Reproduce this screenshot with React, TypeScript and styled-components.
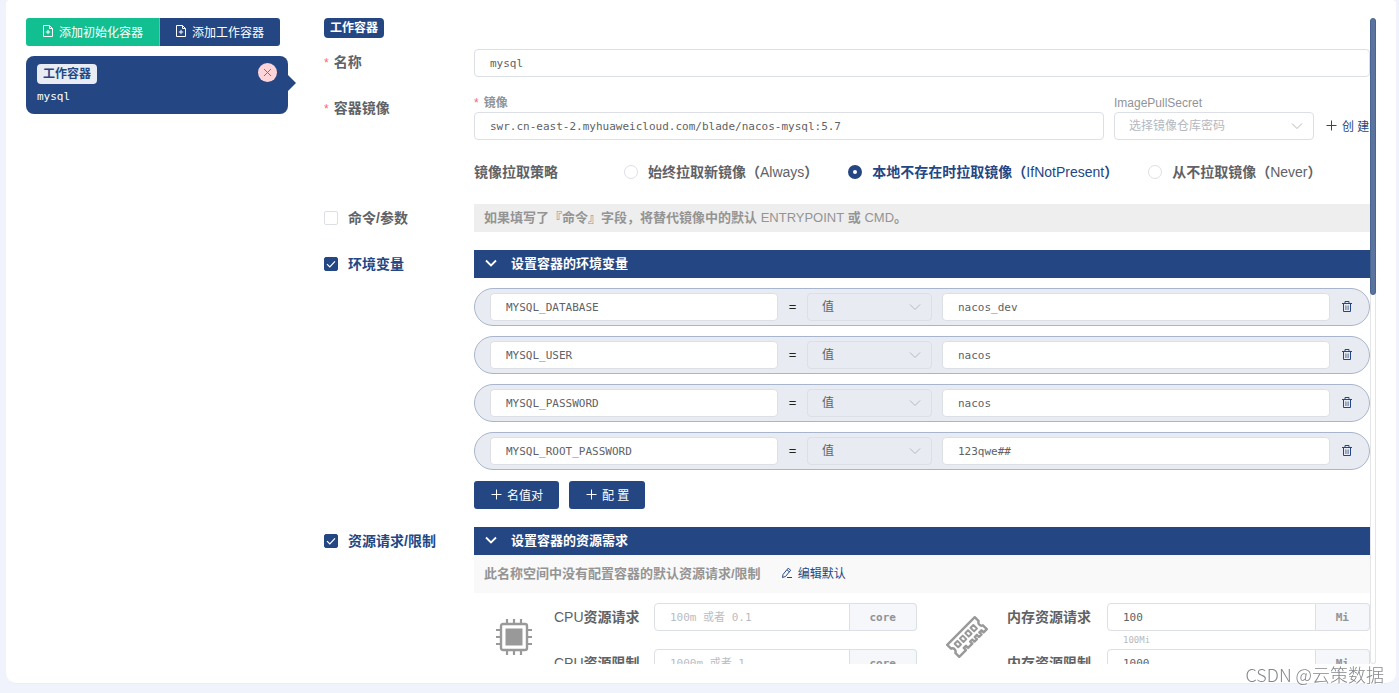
import React from 'react';
import styled, { createGlobalStyle, css } from 'styled-components';

const primary = '#244783';
const border = '#dcdfe6';
const text = '#606266';
const muted = '#909399';
const sans = `'Liberation Sans', 'Noto Sans CJK SC', sans-serif`;
const mono = `'DejaVu Sans Mono', 'Noto Sans CJK SC', monospace`;

const GlobalStyle = createGlobalStyle`
  *, *::before, *::after { box-sizing: border-box; }
  body { margin: 0; background: #f0f3fb; font-family: ${sans}; font-size: 12px; color: ${text}; overflow: hidden; }
  button, input, select { font: inherit; color: inherit; margin: 0; }
  button { cursor: pointer; }
`;

const Page = styled.div`
  display: flex;
  flex-direction: column;
  height: 100vh;
  padding: 0 3px 9px 6px;
`;

const Card = styled.main`
  flex: 1;
  min-height: 0;
  display: grid;
  grid-template-columns: 262px minmax(0, 1fr);
  gap: 36px;
  padding: 18px 20px 19px;
  background: #fff;
  border-bottom: 1px solid #e9edf5;
  border-radius: 4px 4px 10px 10px;
`;

const Sidebar = styled.aside`
  display: flex;
  flex-direction: column;
  gap: 10px;
`;

const ButtonGroup = styled.div`
  display: flex;
`;

const Button = styled.button<{ $tone?: 'green' | 'text' }>`
  display: flex;
  align-items: center;
  gap: 5px;
  height: 28px;
  padding: 0 16px 2px;
  border: 0;
  border-radius: 3px;
  background: ${p => (p.$tone === 'green' ? '#11bf91' : p.$tone === 'text' ? 'transparent' : primary)};
  color: ${p => (p.$tone === 'text' ? primary : '#fff')};
  white-space: nowrap;

  ${ButtonGroup} &:first-child { border-radius: 3px 0 0 3px; }
  ${ButtonGroup} &:last-child { border-radius: 0 3px 3px 0; box-shadow: inset 1px 0 #92a3c1; }
`;

const CreateButton = styled(Button)`
  flex: 0 0 56px;
  padding: 0 0 2px 11px;
  overflow: hidden;
`;

const ContainerCard = styled.section`
  position: relative;
  display: flex;
  flex-direction: column;
  align-items: flex-start;
  gap: 5px;
  height: 58px;
  padding: 8px 11px;
  border-radius: 8px;
  background: ${primary};
  color: #fff;
  font-family: ${mono};
  font-size: 11px;
  line-height: 16px;

  &::after {
    content: '';
    position: absolute;
    left: 100%;
    top: 19px;
    border: 8px solid transparent;
    border-left-color: ${primary};
    border-right-width: 0;
  }
`;

const Tag = styled.span<{ $light?: boolean }>`
  align-self: flex-start;
  height: 20px;
  padding: 0 6px;
  border-radius: 4px;
  background: ${p => (p.$light ? '#e9edf3' : primary)};
  color: ${p => (p.$light ? primary : '#fff')};
  font: bold 12px/20px ${sans};
`;

const CloseButton = styled.button`
  position: absolute;
  top: 7px;
  right: 11px;
  display: grid;
  place-items: center;
  width: 19px;
  height: 19px;
  padding: 0;
  border: 0;
  border-radius: 50%;
  background: #fdd5d8;
  color: #f0404f;
`;

const ScrollPane = styled.div`
  display: flex;
  min-height: 0;
`;

const Form = styled.form`
  flex: 1;
  min-width: 0;
  overflow: hidden;
  display: flex;
  flex-direction: column;
`;

const Track = styled.div`
  flex: 0 0 6px;
  border: solid #e4e5e9;
  border-width: 0 1px 1px;
  border-radius: 3px;
`;

const Thumb = styled.div`
  height: 43%;
  margin: 0 -1px;
  border: 1px solid #4a6491;
  border-radius: 3px;
  background: #5a739f;
`;

const Row = styled.div<{ $top?: number }>`
  flex: none;
  display: grid;
  grid-template-columns: 150px minmax(0, 1fr);
  margin-top: ${p => p.$top ?? 18}px;
`;

const Title = styled.div`
  font-size: 14px;
  font-weight: bold;
  line-height: 26px;
`;

const Star = styled.span`
  margin-right: 5px;
  color: #f56c6c;
  font-size: 12px;
  font-weight: normal;
`;

const Thin = styled.span`
  font-weight: normal;
`;

const Caption = styled.span`
  padding-bottom: 2px;
`;

const Check = styled.label<{ $on?: boolean }>`
  display: flex;
  align-items: center;
  gap: 10px;
  height: 28px;
  font-size: 14px;
  font-weight: bold;
  color: ${p => (p.$on ? primary : text)};
`;

const Box = styled.input`
  appearance: none;
  width: 14px;
  height: 14px;
  border: 1px solid ${border};
  border-radius: 2px;
  background: #fff;

  &:checked {
    border-color: ${primary};
    background: ${primary} url("data:image/svg+xml,%3Csvg xmlns='http://www.w3.org/2000/svg' viewBox='0 0 12 12'%3E%3Cpath d='M2 6.2 4.8 9 10 3.4' fill='none' stroke='white' stroke-width='1.2'/%3E%3C/svg%3E") center / 12px no-repeat;
  }
`;

const Radio = styled.input`
  appearance: none;
  width: 14px;
  height: 14px;
  border: 1px solid ${border};
  border-radius: 50%;
  background: #fff;

  &:checked { border: 5px solid ${primary}; }
`;

const field = css`
  height: 28px;
  width: 100%;
  min-width: 0;
  border: 1px solid ${border};
  border-radius: 4px;
  background: #fff;
  color: ${text};
  outline: none;
`;

const Input = styled.input`
  ${field}
  padding: 0 15px;
  font-family: ${mono};
  font-size: 11px;
  &::placeholder { color: #b9bcc3; opacity: 1; }
`;

const SelectWrap = styled.div`
  position: relative;
  display: flex;

  svg {
    position: absolute;
    right: 11px;
    top: 8px;
    color: #b4b8c0;
    pointer-events: none;
  }
`;

const Select = styled.select<{ $plain?: boolean }>`
  ${field}
  appearance: none;
  padding: 0 30px 0 14px;
  ${p => (p.$plain ? 'background: transparent;' : 'color: #b4b8c0;')}
`;

const ImageLine = styled.div`
  display: flex;
  align-items: flex-end;
`;

const Stack = styled.div<{ $fixed?: boolean }>`
  flex: ${p => (p.$fixed ? '0 0 200px' : '1')};
  min-width: 0;
  display: flex;
  flex-direction: column;
  margin-right: ${p => (p.$fixed ? 0 : 10)}px;
`;

const SmallLabel = styled.label<{ $bold?: boolean }>`
  height: 17px;
  line-height: 17px;
  color: ${muted};
  font-weight: ${p => (p.$bold ? 'bold' : 'normal')};
`;

const Policy = styled.div`
  display: flex;
  align-items: center;
  margin-top: 18px;
  height: 28px;
  font-size: 14px;
  font-weight: bold;
  white-space: nowrap;
`;

const PolicyName = styled(Caption)`
  width: 150px;
`;

const PolicyOption = styled.label<{ $on?: boolean }>`
  display: flex;
  align-items: center;
  gap: 10px;
  margin-right: 30px;
  color: ${p => (p.$on ? primary : text)};
`;

const Notice = styled.p<{ $pale?: boolean }>`
  display: flex;
  align-items: center;
  gap: 20px;
  height: ${p => (p.$pale ? 38 : 28)}px;
  margin: 0;
  padding: 0 10px 3px;
  background: ${p => (p.$pale ? '#f9f9f9' : '#eee')};
  color: #949494;
  font-size: 13px;
  font-weight: bold;
`;

const EditLink = styled.a`
  display: flex;
  align-items: center;
  gap: 5px;
  color: ${primary};
  font-size: 12px;
  font-weight: normal;
  text-decoration: none;
`;

const PanelHead = styled.button`
  display: flex;
  align-items: center;
  gap: 14px;
  width: 100%;
  height: 28px;
  padding: 0 11px 3px;
  border: 0;
  background: ${primary};
  color: #fff;
  font-size: 13px;
  font-weight: bold;
`;

const EnvList = styled.div`
  display: grid;
  gap: 10px;
  padding: 10px 0 11px;
`;

const EnvRow = styled.div`
  display: grid;
  grid-template-columns: minmax(0, 288fr) 29px minmax(0, 125fr) 10px minmax(0, 388fr) 34px;
  align-items: center;
  height: 38px;
  padding: 0 5px 0 15px;
  border: 1px solid #a7b5cd;
  border-radius: 19px;
  background: #e9ebf2;
`;

const Equals = styled.span`
  padding-bottom: 2px;
  color: #222;
  font-size: 13px;
  text-align: center;
`;

const TrashButton = styled.button`
  grid-column: 6;
  display: grid;
  place-items: center;
  height: 28px;
  padding: 0;
  border: 0;
  background: none;
  color: ${primary};
`;

const ValueInput = styled(Input)`
  grid-column: 5;
`;

const Actions = styled.div`
  display: flex;
  gap: 10px;
`;

const Resources = styled.div`
  display: grid;
  grid-template-columns: 1fr 1fr;
  gap: 10px;
  padding-top: 10px;
`;

const Resource = styled.div`
  display: grid;
  grid-template-columns: 80px minmax(0, 1fr);
`;

const ResourceIcon = styled.div`
  display: grid;
  place-items: center;
  height: 68px;
  color: #999;
`;

const ResourceLine = styled.div`
  display: grid;
  grid-template-columns: 100px minmax(0, 1fr);
  height: 46px;
`;

const ResourceLabel = styled.label`
  font-size: 14px;
  font-weight: bold;
  line-height: 28px;
`;

const Group = styled.div`
  display: flex;
  input { border-radius: 4px 0 0 4px; }
`;

const Unit = styled.span`
  padding: 0 20px;
  height: 28px;
  border: 1px solid ${border};
  border-left: 0;
  border-radius: 0 4px 4px 0;
  background: #f5f7fa;
  color: ${muted};
  font: bold 11px/28px ${mono};
`;

const Hint = styled.div`
  padding-left: 16px;
  color: #b9b9b9;
  font: 9px/18px ${mono};
`;

const Watermark = styled.div`
  position: fixed;
  right: 15px;
  bottom: 6px;
  color: #85878b;
  font-family: 'Noto Sans CJK SC', sans-serif;
  font-size: 18px;
  font-weight: 300;
  line-height: 26px;
  text-shadow: 1px 1px 0 #fff;
`;

const stroke = { fill: 'none', stroke: 'currentColor' } as const;

const FileAdd = () => (
  <svg width="12" height="12" viewBox="0 0 12 12" {...stroke}>
    <path d="M1.5.5H7.5L10.5 3.5V11.5H1.5Z M7.5.5V3.5H10.5 M6 4.8V9.2 M3.8 7H8.2" />
  </svg>
);

const Plus = () => (
  <svg width="12" height="12" viewBox="0 0 12 12" {...stroke}>
    <path d="M6.5 1.5V11.5 M1.5 6.5H11.5" />
  </svg>
);

const Chevron = ({ bold = false }: { bold?: boolean }) => (
  <svg width="12" height="12" viewBox="0 0 12 12" {...stroke} strokeWidth={bold ? 1.8 : 1}>
    <path d="M1 3.5 6 8.5 11 3.5" />
  </svg>
);

const Cross = () => (
  <svg width="9" height="9" viewBox="0 0 9 9" {...stroke}>
    <path d="M1 1 8 8 M8 1 1 8" />
  </svg>
);

const Trash = () => (
  <svg width="12" height="12" viewBox="0 0 12 12" {...stroke}>
    <path d="M1 2.5H11 M4 2.5V.5H8V2.5 M2.5 2.5V10.5H9.5V2.5" />
    <path strokeWidth=".8" d="M4.9 4.5V9 M7.1 4.5V9" />
  </svg>
);

const Pen = () => (
  <svg width="12" height="12" viewBox="0 0 12 12" {...stroke}>
    <path d="M1.5 10.5 2 7.5 7.2 1.2 9.7 3.2 4.5 9.5Z M6 2.8 8.4 4.8 M6 10.5H11" />
  </svg>
);

const Cpu = () => (
  <svg width="36" height="36" viewBox="0 0 36 36" {...stroke}>
    <rect x="5" y="5" width="26" height="26" rx="2" strokeWidth="2.4" />
    <rect x="9.5" y="9.5" width="17" height="17" fill="currentColor" stroke="none" />
    <path strokeWidth="2.2" d="M11 0V5M18 0V5M25 0V5M11 31V36M18 31V36M25 31V36M0 11H5M0 18H5M0 25H5M31 11H36M31 18H36M31 25H36" />
  </svg>
);

const Memory = () => (
  <svg width="42" height="42" viewBox="0 0 42 42" {...stroke} strokeWidth="2.4" strokeLinejoin="round">
    <g transform="rotate(-45 21 21)">
      <path d="M1.5 12.5H40.5V18A3.2 3.2 0 0 0 40.5 24V29.5H36V26.5H33V29.5H29.5V26.5H26.5V29.5H23V26.5H20V29.5H14V26.5H11V29.5H1.5V24A3.2 3.2 0 0 0 1.5 18Z" />
      <path strokeWidth="2" d="M7.500 17H11.500V22H7.500ZM15 17H19V22H15ZM22.500 17H26.500V22H22.500ZM30 17H34V22H30Z" />
    </g>
  </svg>
);

const variables = [
  ['MYSQL_DATABASE', 'nacos_dev'],
  ['MYSQL_USER', 'nacos'],
  ['MYSQL_PASSWORD', 'nacos'],
  ['MYSQL_ROOT_PASSWORD', '123qwe##'],
];

interface QuotaProps {
  id: string;
  label: React.ReactNode;
  unit: string;
  value?: string;
  placeholder?: string;
  hint?: string;
}

const Quota = ({ id, label, unit, value, placeholder, hint }: QuotaProps) => (
  <ResourceLine>
    <ResourceLabel htmlFor={id}>{label}</ResourceLabel>
    <div>
      <Group>
        <Input id={id} defaultValue={value} placeholder={placeholder} />
        <Unit>{unit}</Unit>
      </Group>
      {hint && <Hint>{hint}</Hint>}
    </div>
  </ResourceLine>
);

export default function App() {
  return (
    <Page>
      <GlobalStyle />
      <Card>
        <Sidebar>
          <ButtonGroup>
            <Button $tone="green"><FileAdd />添加初始化容器</Button>
            <Button><FileAdd />添加工作容器</Button>
          </ButtonGroup>
          <ContainerCard>
            <Tag $light>工作容器</Tag>
            mysql
            <CloseButton aria-label="删除"><Cross /></CloseButton>
          </ContainerCard>
        </Sidebar>

        <ScrollPane>
          <Form onSubmit={e => e.preventDefault()}>
            <Tag>工作容器</Tag>

            <Row $top={11}>
              <Title as="label" htmlFor="name"><Star>*</Star>名称</Title>
              <Input id="name" defaultValue="mysql" />
            </Row>

            <Row>
              <Title><Star>*</Star>容器镜像</Title>
              <div>
                <ImageLine>
                  <Stack>
                    <SmallLabel $bold htmlFor="image"><Star>*</Star>镜像</SmallLabel>
                    <Input id="image" defaultValue="swr.cn-east-2.myhuaweicloud.com/blade/nacos-mysql:5.7" />
                  </Stack>
                  <Stack $fixed>
                    <SmallLabel htmlFor="secret">ImagePullSecret</SmallLabel>
                    <SelectWrap>
                      <Select id="secret"><option>选择镜像仓库密码</option></Select>
                      <Chevron />
                    </SelectWrap>
                  </Stack>
                  <CreateButton type="button" $tone="text"><Plus />创 建</CreateButton>
                </ImageLine>
                <Policy role="radiogroup" aria-label="镜像拉取策略">
                  <PolicyName>镜像拉取策略</PolicyName>
                  <PolicyOption>
                    <Radio type="radio" name="policy" />
                    <Caption>始终拉取新镜像（<Thin>Always</Thin>）</Caption>
                  </PolicyOption>
                  <PolicyOption $on>
                    <Radio type="radio" name="policy" defaultChecked />
                    <Caption>本地不存在时拉取镜像（<Thin>IfNotPresent</Thin>）</Caption>
                  </PolicyOption>
                  <PolicyOption>
                    <Radio type="radio" name="policy" />
                    <Caption>从不拉取镜像（<Thin>Never</Thin>）</Caption>
                  </PolicyOption>
                </Policy>
              </div>
            </Row>

            <Row>
              <Check><Box type="checkbox" /><Caption>命令/参数</Caption></Check>
              <Notice>
                <span>如果填写了『命令』字段，将替代镜像中的默认 <Thin>ENTRYPOINT</Thin> 或 <Thin>CMD</Thin>。</span>
              </Notice>
            </Row>

            <Row>
              <Check $on><Box type="checkbox" defaultChecked /><Caption>环境变量</Caption></Check>
              <div>
                <PanelHead type="button"><Chevron bold />设置容器的环境变量</PanelHead>
                <EnvList>
                  {variables.map(([name, value]) => (
                    <EnvRow key={name}>
                      <Input aria-label="变量名" defaultValue={name} />
                      <Equals>=</Equals>
                      <SelectWrap>
                        <Select $plain aria-label="类型"><option>值</option></Select>
                        <Chevron />
                      </SelectWrap>
                      <ValueInput aria-label="变量值" defaultValue={value} />
                      <TrashButton type="button" aria-label="删除变量"><Trash /></TrashButton>
                    </EnvRow>
                  ))}
                </EnvList>
                <Actions>
                  <Button type="button"><Plus />名值对</Button>
                  <Button type="button"><Plus />配 置</Button>
                </Actions>
              </div>
            </Row>

            <Row>
              <Check $on><Box type="checkbox" defaultChecked /><Caption>资源请求/限制</Caption></Check>
              <div>
                <PanelHead type="button"><Chevron bold />设置容器的资源需求</PanelHead>
                <Notice $pale>
                  此名称空间中没有配置容器的默认资源请求/限制
                  <EditLink href="#edit"><Pen />编辑默认</EditLink>
                </Notice>
                <Resources>
                  <Resource>
                    <ResourceIcon><Cpu /></ResourceIcon>
                    <div>
                      <Quota id="cpu-request" label={<><Thin>CPU</Thin>资源请求</>} placeholder="100m 或者 0.1" unit="core" />
                      <Quota id="cpu-limit" label={<><Thin>CPU</Thin>资源限制</>} placeholder="1000m 或者 1" unit="core" />
                    </div>
                  </Resource>
                  <Resource>
                    <ResourceIcon><Memory /></ResourceIcon>
                    <div>
                      <Quota id="memory-request" label="内存资源请求" value="100" unit="Mi" hint="100Mi" />
                      <Quota id="memory-limit" label="内存资源限制" value="1000" unit="Mi" />
                    </div>
                  </Resource>
                </Resources>
              </div>
            </Row>
          </Form>
          <Track><Thumb /></Track>
        </ScrollPane>
      </Card>
      <Watermark>CSDN @云策数据</Watermark>
    </Page>
  );
}
